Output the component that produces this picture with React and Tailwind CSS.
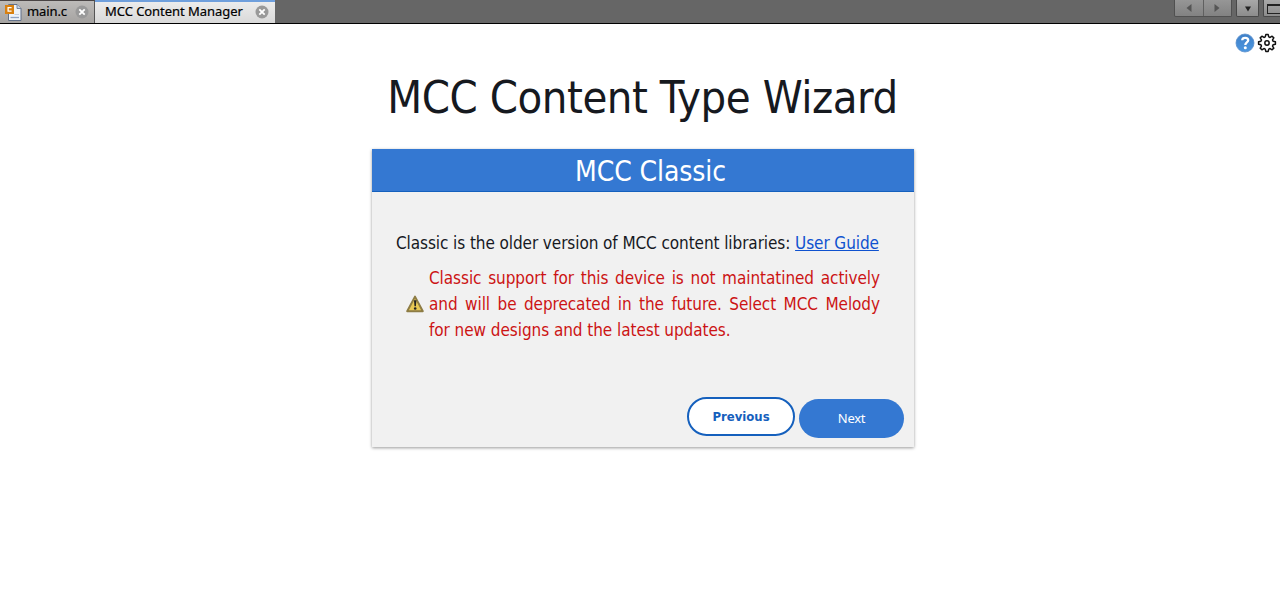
import React from "react";

const CloseIcon = ({ fill, className }) => (
  <svg viewBox="0 0 14 14" className={className}>
    <circle cx="7" cy="7" r="6.5" fill={fill} />
    <path d="M4.3 4.3l5.4 5.4M9.7 4.3l-5.4 5.4" stroke="#fff" strokeWidth="1.8" />
  </svg>
);

const FileIcon = () => (
  <svg viewBox="0 0 17 17" className="w-[17px] h-[17px] shrink-0">
    <path d="M3.5 .5h8.500l4 4v12h-12.500z" fill="#eef3fa" stroke="#62718a" />
    <path d="M12 .5v4h4" fill="#c5d3e8" stroke="#62718a" strokeWidth="0.8" />
    <path d="M5.500 13.500h8.500" stroke="#8fa3c4" strokeWidth="1.300" />
    <path d="M9.500 10.500h4.500" stroke="#c3cfe2" />
    <rect x="0" y="1" width="9" height="9" fill="#d9800f" />
    <path d="M6.600 3.600h-3.500v3.500h3.500" fill="none" stroke="#fff" strokeWidth="1.3" />
  </svg>
);

const HelpIcon = () => (
  <svg viewBox="0 0 20 20" className="w-5 h-5">
    <defs>
      <linearGradient id="help" x1="0" y1="0" x2="0" y2="1">
        <stop offset="0" stopColor="#3f80c8" />
        <stop offset="1" stopColor="#4c97e0" />
      </linearGradient>
    </defs>
    <circle cx="10" cy="10" r="9" fill="url(#help)" stroke="#5b8fcb" strokeWidth="0.8" />
    <path d="M7.200 7.200C7.300 5.600 8.400 4.900 10.200 4.900s3 .9 3 2.400c0 2.100-2.900 2.300-2.900 4.700" fill="none" stroke="#fff" strokeWidth="2.300" />
    <circle cx="10.300" cy="14.700" r="1.500" fill="#fff" />
  </svg>
);

const point = (radius, degrees) => {
  const angle = (degrees * Math.PI) / 180;
  return `${(12 + radius * Math.sin(angle)).toFixed(2)} ${(12 - radius * Math.cos(angle)).toFixed(2)}`;
};

// 8-tooth cog outline
const gearPath =
  "M" +
  [0, 45, 90, 135, 180, 225, 270, 315]
    .map((a) => [point(7.6, a - 16), point(10.2, a - 8), point(10.2, a + 8), point(7.6, a + 16)].join("L"))
    .join("L") +
  "Z";

const GearIcon = () => (
  <svg viewBox="0 0 24 24" className="w-5 h-5" fill="none" stroke="#111" strokeWidth="1.8" strokeLinejoin="round">
    <path d={gearPath} />
    <circle cx="12" cy="12" r="2.600" />
  </svg>
);

const WarningIcon = () => (
  <svg viewBox="0 0 20 20" className="w-5 h-5 shrink-0">
    <path d="M10 2.600L17.800 17.200H2.200z" fill="#e8c854" stroke="#8d7c45" strokeWidth="2" strokeLinejoin="round" />
    <path d="M9 6.300h2.400l-.5 6h-1.400z" fill="#222" />
    <circle cx="10.200" cy="14.500" r="1.300" fill="#222" />
  </svg>
);

const TabBar = () => (
  <div className="flex h-6 items-start border-b border-black bg-[#666666] font-['Noto_Sans'] text-[13px] text-black">
    <div className="flex h-[23px] w-[95px] items-center border-r border-[#555] border-t border-t-[#4a4545] bg-linear-to-b from-[#bdbbb9] to-[#a5a3a1] pl-[5px]">
      <FileIcon />
      <span className="ml-[5px] w-[40px] whitespace-nowrap tracking-[-0.1px] [-webkit-text-stroke:0.2px_black]">main.c</span>
      <CloseIcon fill="#999" className="ml-2 h-[14px] w-[14px]" />
    </div>
    <div className="flex h-[23px] w-[180px] items-center border-t-2 border-t-[#6f9fdc] bg-linear-to-b from-[#ececec] to-[#d9d9d9] pb-[2px] pl-[10px]">
      <span className="w-[139px] whitespace-nowrap tracking-[-0.05px] [-webkit-text-stroke:0.2px_black]">MCC Content Manager</span>
      <CloseIcon fill="#999" className="ml-[11px] h-[14px] w-[14px]" />
    </div>
    <div className="ml-auto flex">
      <div className="flex h-[17px] w-[58px] rounded-b-[2px] border border-t-0 border-[#505050] bg-linear-to-b from-[#969696] to-[#828282]">
        <div className="flex flex-1 items-center justify-center border-r border-[#606060]">
          <svg viewBox="0 0 6 8" className="h-2 w-[6px]"><path d="M5.500 0v8L.5 4z" fill="#555" /></svg>
        </div>
        <div className="flex flex-1 items-center justify-center">
          <svg viewBox="0 0 6 8" className="h-2 w-[6px]"><path d="M.5 0v8l5-4z" fill="#555" /></svg>
        </div>
      </div>
      <div className="ml-1 flex h-[17px] w-[23px] items-center justify-center rounded-b-[2px] border border-t-0 border-[#484848] bg-linear-to-b from-[#a8a8a8] to-[#8c8c8c]">
        <svg viewBox="0 0 8 6" className="mt-[2px] h-[6px] w-2"><path d="M1 .5h6L4 5.500z" fill="#222" /></svg>
      </div>
      <div className="ml-1 flex h-[17px] w-[17px] items-center overflow-hidden rounded-bl-[2px] border-b border-l border-[#484848] bg-linear-to-b from-[#a8a8a8] to-[#8c8c8c] pt-[2px] pl-[3px]">
        <div className="h-[10px] w-[14px] shrink-0 border border-r-0 border-t-2 border-[#222]" />
      </div>
    </div>
  </div>
);

const App = () => {
  return (
    <div className="h-[593px] overflow-hidden bg-white font-['DejaVu_Sans_Condensed','DejaVu_Sans',sans-serif] [font-stretch:condensed] text-[#16191f]">
      <TabBar />
      <div className="flex h-[38px] items-center justify-end gap-[2px] pr-[3px]">
        <HelpIcon />
        <GearIcon />
      </div>

      <h1 className="ml-[5px] pt-px text-center text-[45px] leading-[70px] tracking-[-0.47px] whitespace-nowrap">MCC Content Type Wizard</h1>

      <div className="ml-[372px] mt-[16px] flex h-[298px] w-[542px] flex-col bg-[#f1f1f1] shadow-[0_1px_3px_rgba(0,0,0,0.4)]">
        <div className="h-[43px] border-b border-[#1560bd] bg-[#3478d2] pl-[15px] text-center text-[28px] leading-[46px] tracking-[-0.1px] text-white">
          MCC Classic
        </div>
        <p className="mt-[38px] pl-6 text-[17px] leading-[26px] tracking-[-0.085px] whitespace-nowrap">
          Classic is the older version of MCC content libraries:{" "}
          <a href="#" className="text-[#0f52cf] underline">User Guide</a>
        </p>
        <div className="mt-[9px] flex items-center pl-[33px]">
          <WarningIcon />
          <p className="ml-1 w-[451px] text-justify text-[17px] leading-[26px] tracking-[-0.065px] text-[#cc1414]">
            Classic support for this device is not maintatined actively and will be deprecated in the future. Select MCC Melody for new designs and the latest updates.
          </p>
        </div>
        <div className="mt-auto flex justify-end gap-1 pr-[10px] pb-[9px]">
          <button className="h-[39px] w-[108px] -translate-y-[2px] rounded-full border-2 border-[#1560bd] bg-white text-[13px] font-bold text-[#1560bd]">
            Previous
          </button>
          <button className="h-[39px] w-[105px] rounded-full bg-[#3478d2] font-['Noto_Sans'] text-[13px] tracking-[-0.3px] text-white">
            Next
          </button>
        </div>
      </div>
    </div>
  );
};

export default App;
